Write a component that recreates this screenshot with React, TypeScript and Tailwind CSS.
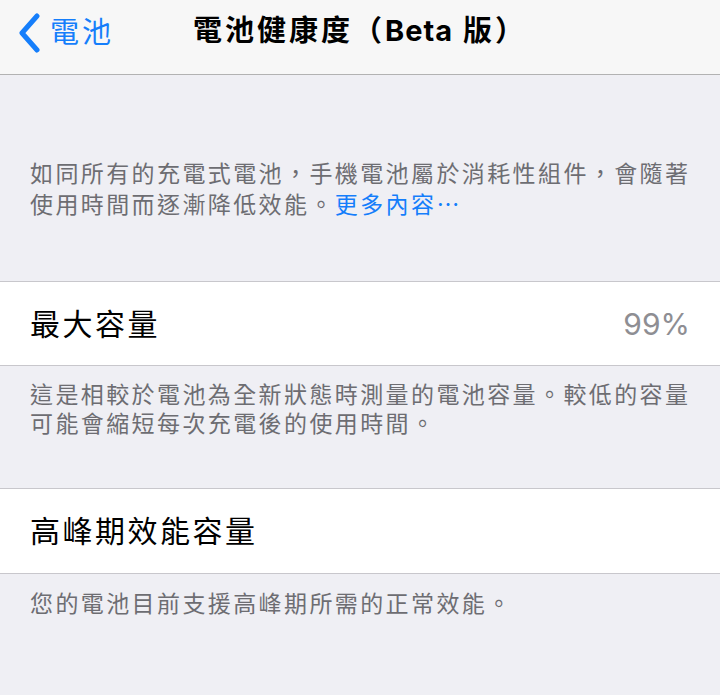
import { ReactNode } from 'react';

const font = 'font-[Inter,"Noto_Sans_CJK_TC",sans-serif]';

function Row({ label, value, height }: { label: string; value?: string; height: string }) {
  return (
    <div className={`flex ${height} items-center justify-between border-y border-[#c8c7cc] bg-white pl-[30px] pr-[30px]`}>
      <span className="text-[30px] leading-[38px] tracking-[2.5px] text-black">{label}</span>
      {value && <span className="text-[30px] leading-[38px] text-[#8e8e93]">{value}</span>}
    </div>
  );
}

function Footer({ children, className }: { children: ReactNode; className: string }) {
  return (
    <p className={`pl-[30px] pr-[26px] text-[23px] leading-[29px] tracking-[2.4px] text-[#6d6d72] ${className}`}>
      {children}
    </p>
  );
}

export default function App() {
  return (
    <div className={`${font} min-h-[695px] bg-[#efeff4]`}>
      <header className="grid h-[75px] grid-cols-[1fr_auto_1fr] items-start border-b border-[#b2b2b2] bg-[#f7f7f7] pt-[12px]">
        <div className="flex items-center pl-[17px] text-[#157efb]">
          <svg width="24" height="40" viewBox="0 0 24 40" className="mt-[1px]">
            <path d="M20 3 L5 20 L20 37" fill="none" stroke="currentColor" strokeWidth="5" strokeLinecap="round" strokeLinejoin="round" />
          </svg>
          <span className="ml-[9px] text-[29px] leading-[38px] tracking-[3px]">電池</span>
        </div>
        <h1 className="text-[29px] font-bold leading-[38px] tracking-[3px] text-black">
          電池健康度（<span className="tracking-[1px]">Beta</span> 版）
        </h1>
        <div />
      </header>

      <Footer className="pt-[85px] pb-[61px]">
        如同所有的充電式電池，手機電池屬於消耗性組件，會隨著使用時間而逐漸降低效能。
        <span className='font-["Noto_Sans_CJK_TC",sans-serif] text-[#157efb]'>更多內容…</span>
      </Footer>

      <Row label="最大容量" value="99%" height="h-[85px]" />

      <Footer className="pt-[15px] pb-[49px]">
        這是相較於電池為全新狀態時測量的電池容量。較低的容量可能會縮短每次充電後的使用時間。
      </Footer>

      <Row label="高峰期效能容量" height="h-[86px]" />

      <Footer className="pt-[16px]">您的電池目前支援高峰期所需的正常效能。</Footer>
    </div>
  );
}
